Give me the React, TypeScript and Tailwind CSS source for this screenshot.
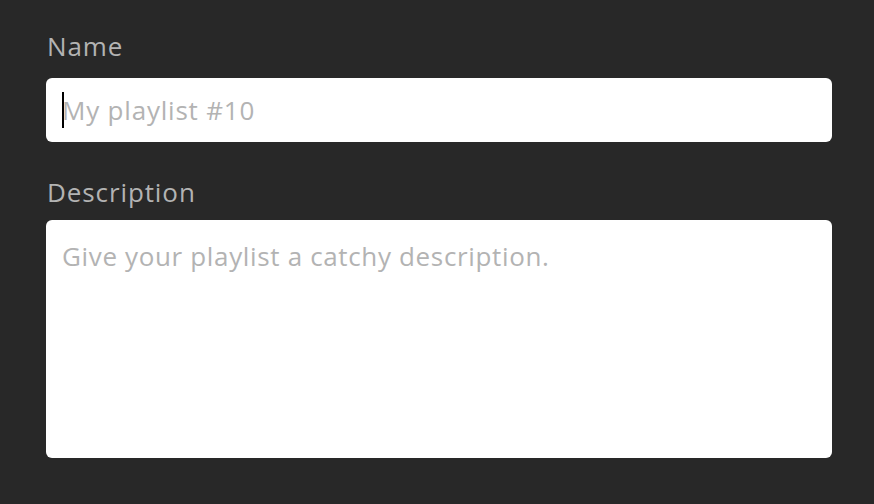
export default function App() {
  return (
    <div className="min-h-screen w-full bg-[#282828] px-[46px] pt-[26px] font-['Open_Sans',_'Liberation_Sans',_sans-serif]">
      <div className="flex w-[786px] flex-col">
        <label className="h-[40px] pl-[1px] text-[26px] leading-[40px] tracking-[0.9px] text-[#b3b3b3]">
          Name
        </label>
        <div className="relative mt-[12px]">
          <input
            className="h-[64px] w-full rounded-[6px] bg-white px-[16px] text-[26px] tracking-[0.8px] text-black caret-transparent outline-none placeholder:text-[#b3b3b3]"
            placeholder="My playlist #10"
          />
          <span className="pointer-events-none absolute left-[16px] top-[14px] h-[36px] w-[2px] bg-black" />
        </div>
        <label className="mt-[30px] h-[40px] pl-[1px] text-[26px] leading-[40px] tracking-[0.9px] text-[#b3b3b3]">
          Description
        </label>
        <textarea
          className="mt-[8px] h-[238px] w-full resize-none rounded-[6px] bg-white px-[16px] pt-[18px] text-[26px] leading-[36px] tracking-[0.65px] text-black outline-none placeholder:text-[#b3b3b3]"
          placeholder="Give your playlist a catchy description."
        />
      </div>
    </div>
  );
}
